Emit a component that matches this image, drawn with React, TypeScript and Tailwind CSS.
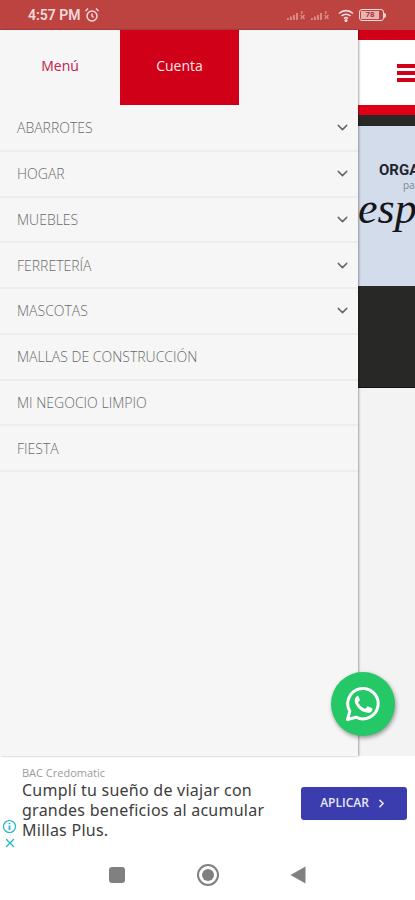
import { ChevronDown, ChevronRight, X } from 'lucide-react';

const items = [
  { label: 'ABARROTES', sub: true },
  { label: 'HOGAR', sub: true },
  { label: 'MUEBLES', sub: true },
  { label: 'FERRETERÍA', sub: true },
  { label: 'MASCOTAS', sub: true },
  { label: 'MALLAS DE CONSTRUCCIÓN', sub: false },
  { label: 'MI NEGOCIO LIMPIO', sub: false },
  { label: 'FIESTA', sub: false },
];

function Signal() {
  return (
    <svg width="23" height="11" viewBox="0 0 23 11" fill="#d98a86">
      <rect x="0" y="8" width="2" height="2" />
      <rect x="3" y="6.5" width="2" height="3.5" />
      <rect x="6" y="5" width="2" height="5" />
      <rect x="9" y="3" width="2" height="7" />
      <path d="M14 1h1.5v3H14zM13 5.500l1-1 1.500 1.500 1.500-1.500 1 1L16.500 7 18 8.500l-1 1L15.500 8 14 9.500l-1-1L14.500 7z" />
    </svg>
  );
}

export default function App() {
  return (
    <div className="relative w-[415px] h-[900px] overflow-hidden bg-white font-['Open_Sans',sans-serif]">
      {/* Status bar */}
      <div className="h-[30px] bg-[#bd4341] flex items-center pl-[28px] pr-[29px]">
        <span className="text-[14px] font-semibold text-[#f1dcdb] font-['Roboto',sans-serif]">4:57 PM</span>
        <svg className="ml-[3px]" width="16" height="16" viewBox="0 0 16 16" fill="none" stroke="#f1dcdb" strokeWidth="1.500">
          <circle cx="8" cy="9" r="5" />
          <path d="M8 6.500V9l1.500 1.500M1.500 4 4 1.500M14.500 4 12 1.500" />
        </svg>
        <div className="ml-auto flex items-center gap-[1px]">
          <Signal />
          <Signal />
          <svg className="ml-[3px]" width="16" height="13" viewBox="0 0 16 13" fill="none" stroke="#f1dcdb" strokeWidth="1.600">
            <path d="M1 4.500a10 10 0 0 1 14 0M3.500 7a6.500 6.500 0 0 1 9 0M6 9.500a3 3 0 0 1 4 0" />
            <circle cx="8" cy="11.500" r=".8" fill="#f1dcdb" />
          </svg>
          <div className="ml-[4px] flex items-center">
            <div className="w-[25px] h-[12px] rounded-[3px] border border-[#f1dcdb] p-[1px] flex">
              <div className="w-[18px] h-full bg-[#e6b5b2] text-[8px] leading-[8px] text-[#a83634] text-center font-bold font-['Roboto',sans-serif]">78</div>
            </div>
            <div className="w-[2px] h-[5px] bg-[#f1dcdb] rounded-r-sm" />
          </div>
        </div>
      </div>

      <div className="flex h-[726px]">
        {/* Drawer */}
        <div className="w-[358px] shrink-0 bg-[#f6f6f6] flex flex-col shadow-[1px_0_2px_rgba(0,0,0,0.35)] z-10">
          <div className="flex h-[75px] shrink-0 mb-[1px]">
            <div className="w-[120px] pb-[5px] flex items-center justify-center text-[14px] text-[#c2224a]">Menú</div>
            <div className="w-[119px] pb-[5px] bg-[#cf0018] flex items-center justify-center text-[14px] text-[#f8e4e6]">Cuenta</div>
          </div>
          {items.map((item) => (
            <div
              key={item.label}
              className="h-[45.75px] shrink-0 border-b-2 border-[#ededed] flex items-center justify-between pl-[17px] pr-[7px] text-[14px] font-light text-[#6a6a6a]"
            >
              <span>{item.label}</span>
              {item.sub && <ChevronDown size={17} strokeWidth={2} className="text-[#666666]" />}
            </div>
          ))}
        </div>

        {/* Page behind the drawer */}
        <div className="flex-1 min-w-0 overflow-hidden bg-[#f3f3f3] flex flex-col">
          <div className="h-[10px] bg-[#cf0018]" />
          <div className="h-[65px] bg-white flex flex-col justify-center gap-[3px] pl-[39px]">
            <div className="w-[30px] h-[4px] bg-[#cf0018]" />
            <div className="w-[30px] h-[4px] bg-[#cf0018]" />
            <div className="w-[30px] h-[4px] bg-[#cf0018]" />
          </div>
          <div className="h-[10px] bg-[#e00016]" />
          <div className="h-[11px] bg-[#282826]" />
          <div className="h-[160px] bg-[#d3dcea] flex flex-col pl-[21px] pt-[35px]">
            <div className="text-[15px] leading-[18px] font-bold text-[#1f2430] whitespace-nowrap font-['Roboto',sans-serif]">ORGA</div>
            <div className="pl-[24px] text-[10px] leading-[12px] text-[#7f8694] whitespace-nowrap">pa</div>
            <div className="-ml-[21px] -mt-[2px] text-[44px] leading-[40px] italic text-[#15151a] whitespace-nowrap font-['Liberation_Serif',serif]">esp</div>
          </div>
          <div className="h-[102px] bg-[#282826] border-b border-[#111111]" />
        </div>
      </div>

      {/* WhatsApp button */}
      <div className="absolute z-20 left-[331px] top-[672px] w-[64px] h-[64px] rounded-full bg-[#25c866] shadow-[1px_2px_4px_rgba(0,0,0,0.4)] flex items-center justify-center">
        <svg width="36" height="36" viewBox="0 0 36 36" fill="none">
          <path d="M2.500 33.500l2.300-8.200A15.200 15.200 0 1 1 11 31.200z" stroke="#ffffff" strokeWidth="3" strokeLinejoin="round" />
          <path
            d="M13.300 9.800c-.5 0-1.300.3-2 1-.9 1-1.600 2.300-1.600 3.900 0 2.200 1.500 4.300 1.800 4.700.3.400 3 4.700 7.400 6.400 3.600 1.400 4.400 1.100 5.200 1 .8-.1 2.600-1 3-2.100.4-1 .4-1.900.3-2.100-.1-.2-.4-.3-.9-.6l-3.200-1.500c-.4-.2-.8-.3-1.100.2l-1.500 1.800c-.3.300-.5.400-1 .1-.5-.2-2-.7-3.800-2.300-1.400-1.300-2.300-2.800-2.600-3.300-.3-.5 0-.7.200-1l.8-.9c.2-.3.300-.5.500-.8.200-.3.100-.6 0-.9l-1.500-3.500c-.3-.9-.7-.8-1-.8z"
            fill="#ffffff"
          />
        </svg>
      </div>

      {/* Ad banner */}
      <div className="h-[94px] bg-white flex items-center pl-[22px] pr-[8px]">
        <div className="flex-1 min-w-0">
          <div className="text-[11px] leading-[12px] text-[#9a9a9a]">BAC Credomatic</div>
          <div className="mt-[1px] text-[16px] leading-[20px] tracking-[0.25px] text-[#3d3d3d] font-['Noto_Sans',sans-serif]">
            Cumplí tu sueño de viajar con
            <br />
            grandes beneficios al acumular
            <br />
            Millas Plus.
          </div>
        </div>
        <div className="w-[106px] h-[33px] bg-[#3b3cae] rounded-[3px] flex items-center justify-center gap-[6px] text-[12px] font-semibold text-[#e8e8f6]">
          APLICAR
          <ChevronRight size={13} strokeWidth={3} />
        </div>
      </div>
      <div className="absolute left-[2px] top-[819px] flex flex-col items-center gap-[2px] text-[#22b5c2]">
        <svg width="15" height="15" viewBox="0 0 15 15" fill="none" stroke="#22b5c2" strokeWidth="1.200">
          <circle cx="7.500" cy="7.500" r="6" />
          <path d="M7.500 6.500V11M7.500 4v1.200" strokeWidth="1.800" />
        </svg>
        <X size={14} strokeWidth={2.200} />
      </div>

      {/* Android nav bar */}
      <div className="h-[50px] bg-white flex items-center pl-[109px]">
        <div className="w-[16px] h-[16px] rounded-[3px] bg-[#808080]" />
        <div className="ml-[72px] w-[22px] h-[22px] rounded-full border-2 border-[#808080] flex items-center justify-center">
          <div className="w-[12px] h-[12px] rounded-full bg-[#808080]" />
        </div>
        <svg className="ml-[71px]" width="16" height="18" viewBox="0 0 16 18" fill="#808080">
          <path d="M15.500 0.500V17.500L0.500 9z" />
        </svg>
      </div>
    </div>
  );
}
